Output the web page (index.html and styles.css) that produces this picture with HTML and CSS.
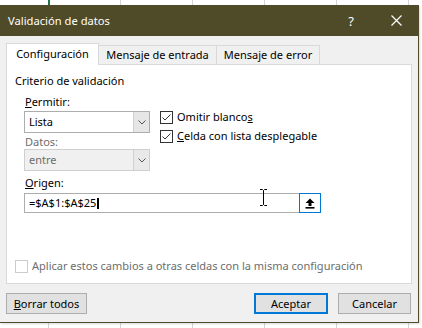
FILE: index.html
```html
<!DOCTYPE html>
<html lang="es">
<head>
    <meta charset="UTF-8">
    <title>Validación de datos</title>
    <link rel="stylesheet" href="styles.css">
</head>
<body>
    <div class="sheet">
        <div class="dialog">
            <!-- barra de título -->
            <div class="titlebar">
                <span class="title">Validación de datos</span>
                <span class="title-btn help">?</span>
                <span class="title-btn close">
                    <svg width="11" height="11" viewBox="0 0 11 11"><path d="M0.5 0.5L10.5 10.5M10.5 0.5L0.5 10.5" stroke="#fff" stroke-width="1.2"/></svg>
                </span>
            </div>

            <div class="content">
                <!-- pestañas -->
                <div class="tabs">
                    <div class="tab active">Configuración</div>
                    <div class="tab">Mensaje de entrada</div>
                    <div class="tab">Mensaje de error</div>
                </div>

                <div class="panel">
                    <div class="group-title">Criterio de validación</div>

                    <div class="criteria">
                        <div class="fields">
                            <div class="field-label"><u>P</u>ermitir:</div>
                            <div class="combo">
                                <span class="combo-value">Lista</span>
                                <span class="combo-arrow">
                                    <svg width="8" height="5" viewBox="0 0 8 5"><path d="M0.5 0.5L4 4L7.5 0.5" fill="none" stroke="#555" stroke-width="1"/></svg>
                                </span>
                            </div>
                            <div class="field-label disabled">Datos:</div>
                            <div class="combo disabled">
                                <span class="combo-value">entre</span>
                                <span class="combo-arrow">
                                    <svg width="8" height="5" viewBox="0 0 8 5"><path d="M0.5 0.5L4 4L7.5 0.5" fill="none" stroke="#555" stroke-width="1"/></svg>
                                </span>
                            </div>
                        </div>

                        <div class="options">
                            <div class="check-row">
                                <span class="checkbox">
                                    <svg width="11" height="11" viewBox="0 0 11 11"><path d="M1.5 5.5L4 8L9.5 2.5" fill="none" stroke="#333" stroke-width="1"/></svg>
                                </span>
                                <span>Omitir blanco<u>s</u></span>
                            </div>
                            <div class="check-row">
                                <span class="checkbox">
                                    <svg width="11" height="11" viewBox="0 0 11 11"><path d="M1.5 5.5L4 8L9.5 2.5" fill="none" stroke="#333" stroke-width="1"/></svg>
                                </span>
                                <span><u>C</u>elda con lista desplegable</span>
                            </div>
                        </div>
                    </div>

                    <div class="field-label origin-label"><u>O</u>rigen:</div>
                    <div class="source">
                        <span class="source-value">=$A$1:$A$25</span><span class="caret"></span>
                        <span class="collapse-btn">
                            <svg width="10" height="11" viewBox="0 0 10 11"><path d="M5 0.5L9.5 5H6.5V8H3.5V5H0.5Z" fill="#000"/><rect x="0.5" y="9" width="9" height="1.6" fill="#000"/></svg>
                        </span>
                        <!-- cursor del ratón -->
                        <svg class="ibeam" width="9" height="17" viewBox="0 0 9 17"><path d="M1 0.5H3.5L4.5 1.5L5.5 0.5H8M4.5 1.5V15.5M1 16.5H3.5L4.5 15.5L5.5 16.5H8" fill="none" stroke="#000" stroke-width="1"/></svg>
                    </div>

                    <div class="check-row apply">
                        <span class="checkbox disabled"></span>
                        <span>Aplicar estos cambios a otras celdas con la misma configuración</span>
                    </div>
                </div>

                <!-- botones -->
                <div class="footer">
                    <button class="btn"><u>B</u>orrar todos</button>
                    <button class="btn default">Aceptar</button>
                    <button class="btn">Cancelar</button>
                </div>
            </div>
        </div>
    </div>
</body>
</html>
```

FILE: styles.css
```css
* {
    margin: 0;
    padding: 0;
    box-sizing: border-box;
}

body {
    width: 422px;
    height: 328px;
    overflow: hidden;
    font-family: "Noto Sans", "Liberation Sans", sans-serif;
    font-size: 11px;
    line-height: 14px;
    color: #000;
}

/* hoja de cálculo detrás del diálogo */
.sheet {
    width: 422px;
    height: 328px;
    padding-top: 5px;
    background-color: #fff;
    background-image:
        linear-gradient(#217346, #217346),
        linear-gradient(to right, #d4d4d4 1px, transparent 1px);
    background-size: 2px 5px, 72px 100%;
    background-position: 48px 0, 48px 0;
    background-repeat: no-repeat, repeat;
}

.dialog {
    width: 419px;
    height: 318px;
    background-color: #f0f0f0;
    border-right: 1px solid #4f4b28;
    border-bottom: 1px solid #4f4b28;
    box-shadow: 1px 1px 2px rgba(0, 0, 0, 0.15);
    display: flex;
    flex-direction: column;
}

/* barra de título */
.titlebar {
    height: 31px;
    flex-shrink: 0;
    display: flex;
    align-items: center;
    padding-left: 8px;
    background-color: #4f4b28;
    color: #fff;
}

.title {
    flex: 1;
    font-size: 11.2px;
}

.title-btn {
    display: flex;
    align-items: center;
    justify-content: center;
    height: 31px;
}

.help {
    width: 46px;
    font-size: 13px;
}

.close {
    width: 44px;
}

.content {
    flex: 1;
    padding: 7px 7px 0 6px;
    display: flex;
    flex-direction: column;
}

/* pestañas */
.tabs {
    display: flex;
    align-items: flex-end;
    height: 21px;
}

.tab {
    height: 19px;
    line-height: 17px;
    text-align: center;
    white-space: nowrap;
    border: 1px solid #d9d9d9;
    border-bottom: none;
    border-left: none;
    background-color: #f0f0f0;
}

.tab.active {
    width: 93px;
    height: 22px;
    margin-bottom: -1px;
    line-height: 20px;
    border-left: 1px solid #d9d9d9;
    background-color: #fff;
    position: relative;
    z-index: 1;
}

.tab:nth-child(2) {
    width: 118px;
}

.tab:nth-child(3) {
    width: 103px;
}

.panel {
    height: 220px;
    width: 406px;
    padding-top: 9px;
    background-color: #fff;
    border: 1px solid #d9d9d9;
}

.group-title {
    padding-left: 8px;
}

.criteria {
    display: flex;
    margin-top: 7px;
}

.fields {
    width: 126px;
    margin-left: 17px;
}

.field-label {
    padding-left: 1px;
}

.field-label.disabled {
    margin-top: 2px;
    color: #6d6d6d;
}

.combo {
    display: flex;
    height: 22px;
    margin-top: 2px;
    border: 1px solid #adadad;
    background-color: #fff;
}

.combo.disabled {
    margin-top: 0;
    border-color: #cfcfcf;
    background-color: #f0f0f0;
    color: #6d6d6d;
}

.combo-value {
    flex: 1;
    padding-left: 4px;
    line-height: 20px;
}

.combo-arrow {
    width: 16px;
    display: flex;
    align-items: center;
    justify-content: center;
    border-left: 1px solid #d0d0d0;
    background-color: #e6e6e6;
}

.combo.disabled .combo-arrow {
    background-color: #e9e9e9;
}

.options {
    margin-left: 10px;
    padding-top: 15px;
    display: flex;
    flex-direction: column;
    gap: 5px;
}

.check-row {
    display: flex;
    align-items: center;
    gap: 4px;
}

.checkbox {
    width: 13px;
    height: 13px;
    border: 1px solid #333;
    background-color: #fff;
    display: flex;
    align-items: center;
    justify-content: center;
}

.checkbox.disabled {
    border-color: #cccccc;
}

.origin-label {
    margin: 5px 0 0 17px;
}

/* campo de origen */
.source {
    position: relative;
    display: flex;
    align-items: center;
    width: 297px;
    height: 20px;
    margin: 3px 0 0 17px;
    padding-left: 4px;
    border: 1px solid #adadad;
    border-right: none;
}

.source-value {
    line-height: 18px;
}

.caret {
    width: 2px;
    height: 11px;
    margin-left: 1px;
    background-color: #000;
}

.collapse-btn {
    margin-left: auto;
    width: 22px;
    height: 20px;
    margin-top: -1px;
    margin-bottom: -1px;
    display: flex;
    align-items: center;
    justify-content: center;
    border: 1px solid #0078d7;
    background-color: #fff;
}

.ibeam {
    position: absolute;
    left: 234px;
    top: -5px;
}

.apply {
    margin: 46px 0 0 8px;
    color: #6d6d6d;
}

/* botones inferiores */
.footer {
    display: flex;
    gap: 10px;
    margin-top: 9px;
}

.btn {
    height: 21px;
    font-family: inherit;
    font-size: 11px;
    line-height: 19px;
    color: #000;
    background-color: #e1e1e1;
    border: 1px solid #adadad;
}

.btn:first-child {
    width: 81px;
}

.btn.default {
    width: 74px;
    margin-left: auto;
    border: 2px solid #0078d7;
    line-height: 17px;
}

.btn:last-child {
    width: 73px;
}
```
